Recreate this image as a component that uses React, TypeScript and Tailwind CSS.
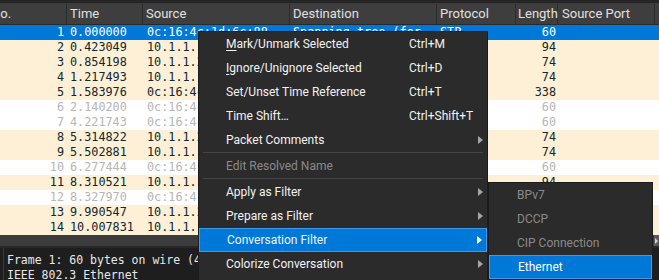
import React from 'react'

type Row = {
  no: number
  time: string
  src: string
  dst: string
  proto: string
  len: string
  kind?: 'sel' | 'ign'
}

const rows: Row[] = [
  { no: 1, time: '0.000000', src: '0c:16:4c:1d:6c:88', dst: 'Spanning-tree-(for-bridges)_00', proto: 'STP', len: '60', kind: 'sel' },
  { no: 2, time: '0.423049', src: '10.1.1.1', dst: '10.1.1.2', proto: 'CIP', len: '94' },
  { no: 3, time: '0.854198', src: '10.1.1.2', dst: '10.1.1.1', proto: 'TCP', len: '74' },
  { no: 4, time: '1.217493', src: '10.1.1.1', dst: '10.1.1.2', proto: 'TCP', len: '74' },
  { no: 5, time: '1.583976', src: '0c:16:4c:1d:6c:88', dst: 'Spanning-tree-(for-bridges)_00', proto: 'STP', len: '338' },
  { no: 6, time: '2.140200', src: '0c:16:4c:1d:6c:88', dst: 'Spanning-tree-(for-bridges)_00', proto: 'STP', len: '60', kind: 'ign' },
  { no: 7, time: '4.221743', src: '0c:16:4c:1d:6c:88', dst: 'Spanning-tree-(for-bridges)_00', proto: 'STP', len: '60', kind: 'ign' },
  { no: 8, time: '5.314822', src: '10.1.1.2', dst: '10.1.1.1', proto: 'TCP', len: '74' },
  { no: 9, time: '5.502881', src: '10.1.1.1', dst: '10.1.1.2', proto: 'TCP', len: '74' },
  { no: 10, time: '6.277444', src: '0c:16:4c:1d:6c:88', dst: 'Spanning-tree-(for-bridges)_00', proto: 'STP', len: '60', kind: 'ign' },
  { no: 11, time: '8.310521', src: '10.1.1.1', dst: '10.1.1.2', proto: 'CIP', len: '94' },
  { no: 12, time: '8.327970', src: '0c:16:4c:1d:6c:88', dst: 'Spanning-tree-(for-bridges)_00', proto: 'STP', len: '60', kind: 'ign' },
  { no: 13, time: '9.990547', src: '10.1.1.2', dst: '10.1.1.1', proto: 'TCP', len: '74' },
  { no: 14, time: '10.007831', src: '10.1.1.1', dst: '10.1.1.2', proto: 'TCP', len: '74' },
]

type Item =
  | { sep: true }
  | { sep?: false; label: React.ReactNode; sc?: string; arrow?: boolean; disabled?: boolean; active?: boolean }

const menu: Item[] = [
  { label: <><span className="underline underline-offset-2">M</span>ark/Unmark Selected</>, sc: 'Ctrl+M' },
  { label: <><span className="underline underline-offset-2">I</span>gnore/Unignore Selected</>, sc: 'Ctrl+D' },
  { label: 'Set/Unset Time Reference', sc: 'Ctrl+T' },
  { label: 'Time Shift…', sc: 'Ctrl+Shift+T' },
  { label: 'Packet Comments', arrow: true },
  { sep: true },
  { label: 'Edit Resolved Name', disabled: true },
  { sep: true },
  { label: 'Apply as Filter', arrow: true },
  { label: 'Prepare as Filter', arrow: true },
  { label: 'Conversation Filter', arrow: true, active: true },
  { label: 'Colorize Conversation', arrow: true },
  { label: 'SCTP', arrow: true },
]

const sub = [
  { label: 'BPv7', disabled: true },
  { label: 'DCCP', disabled: true },
  { label: 'CIP Connection', disabled: true },
  { label: 'Ethernet', active: true },
]

function Arrow({ light }: { light?: boolean }) {
  return (
    <svg width="5" height="8" viewBox="0 0 5 8" className="shrink-0">
      <polygon points="0,0 5,4 0,8" fill={light ? '#ffffff' : '#a6a6a6'} />
    </svg>
  )
}

export default function App(): React.JSX.Element {
  return (
    <div className="relative w-[659px] h-[280px] overflow-hidden bg-[#1e1e1e] font-['Roboto',sans-serif]">
      <div className="h-[4px] bg-[#252525] border-b border-[#3a3a3a]" />

      {/* column header */}
      <div className="flex h-[21px] bg-[#3e3e3e] border-b border-[#2a2a2a] text-[13px] leading-[20px] text-[#e0e0e0] ml-[-12px]">
        <div className="w-[79px] pl-[3px] border-r border-[#2c2c2c]">No.</div>
        <div className="w-[76px] pl-[3px] border-r border-[#2c2c2c]">Time</div>
        <div className="w-[147px] pl-[3px] border-r border-[#2c2c2c]">Source</div>
        <div className="w-[147px] pl-[3px] border-r border-[#2c2c2c]">Destination</div>
        <div className="w-[79px] pl-[3px] border-r border-[#2c2c2c]">Protocol</div>
        <div className="w-[42px] pl-[2px] border-r border-[#2c2c2c]">Length</div>
        <div className="w-[97px] pl-[4px] border-r border-[#2c2c2c] whitespace-nowrap">Source Port</div>
        <div className="flex-1" />
      </div>

      {/* packet list */}
      <div className="font-['DejaVu_Sans_Mono',monospace] text-[11.8px] leading-[15px]">
        {rows.map((r) => {
          const bg = r.kind === 'sel' ? 'bg-[#0078d7] text-white' : r.kind === 'ign' ? 'bg-white text-[#b6b6b6]' : 'bg-[#fdf0d6] text-[#12272e]'
          return (
            <div key={r.no} className={`flex h-[15px] whitespace-nowrap ml-[-12px] ${bg}`}>
              <div className="w-[79px] pr-[3px] text-right">{r.no}</div>
              <div className="w-[76px] pl-[3px] overflow-hidden">{r.time}</div>
              <div className="w-[147px] pl-[4px] overflow-hidden">{r.src}</div>
              <div className="w-[147px] pl-[3px] overflow-hidden text-ellipsis">{r.dst}</div>
              <div className="w-[79px] pl-[3px] overflow-hidden">{r.proto}</div>
              <div className="w-[42px] pr-[2px] text-right">{r.len}</div>
              <div className="flex-1" />
            </div>
          )
        })}
      </div>

      {/* horizontal scrollbar */}
      <div className="flex h-[11px] bg-[#3c3c3c] justify-end">
        <div className="w-[5px] h-[11px] bg-[#5a5a5a] flex items-center justify-center">
          <svg width="3" height="6" viewBox="0 0 3 6"><polygon points="0,0 3,3 0,6" fill="#d0d0d0" /></svg>
        </div>
      </div>
      <div className="h-[2px] bg-[#282828]" />

      {/* packet details */}
      <div className="flex h-[40px]">
        <div className="w-[4px] border-r border-[#3a3a3a]" />
        <div className="pl-[3px] pt-[5px] font-['DejaVu_Sans_Mono',monospace] text-[11.5px] leading-[14.5px] text-[#e8e8e8] whitespace-nowrap">
          <div>Frame 1: 60 bytes on wire (480 bits), 60 bytes captured (480 bits) on interface 0</div>
          <div>IEEE 802.3 Ethernet</div>
        </div>
      </div>

      {/* context menu */}
      <div className="absolute left-[198px] top-[31px] w-[290px] bg-[#2b2b2b] border border-[#1c1c1c] text-[12px] text-[#f2f2f2]">
        {menu.map((m, i) =>
          m.sep ? (
            <div key={i} className="h-[2px] mx-[4px] border-t border-[#444444]" />
          ) : (
            <div
              key={i}
              className={`flex items-center h-[24px] pl-[27px] pr-[4px] ${
                m.active ? 'bg-[#0078d7] border border-[#3d9be9] pl-[26px] pr-[3px]' : ''
              } ${m.disabled ? 'text-[#8a8a8a]' : ''}`}
            >
              <div className="w-[183px] whitespace-nowrap">{m.label}</div>
              <div className="flex-1 whitespace-nowrap">{m.sc}</div>
              {m.arrow && <Arrow light={m.active} />}
            </div>
          )
        )}
      </div>

      {/* submenu */}
      <div className="absolute left-[488px] top-[182px] w-[165px] bg-[#2b2b2b] border border-[#1c1c1c] text-[12px] text-[#f2f2f2]">
        {sub.map((s) => (
          <div
            key={s.label}
            className={`flex items-center h-[24px] pl-[28px] whitespace-nowrap ${
              s.active ? 'bg-[#0078d7] border border-[#3d9be9] pl-[27px] text-white' : 'text-[#8a8a8a]'
            }`}
          >
            {s.label}
          </div>
        ))}
      </div>
    </div>
  )
}
